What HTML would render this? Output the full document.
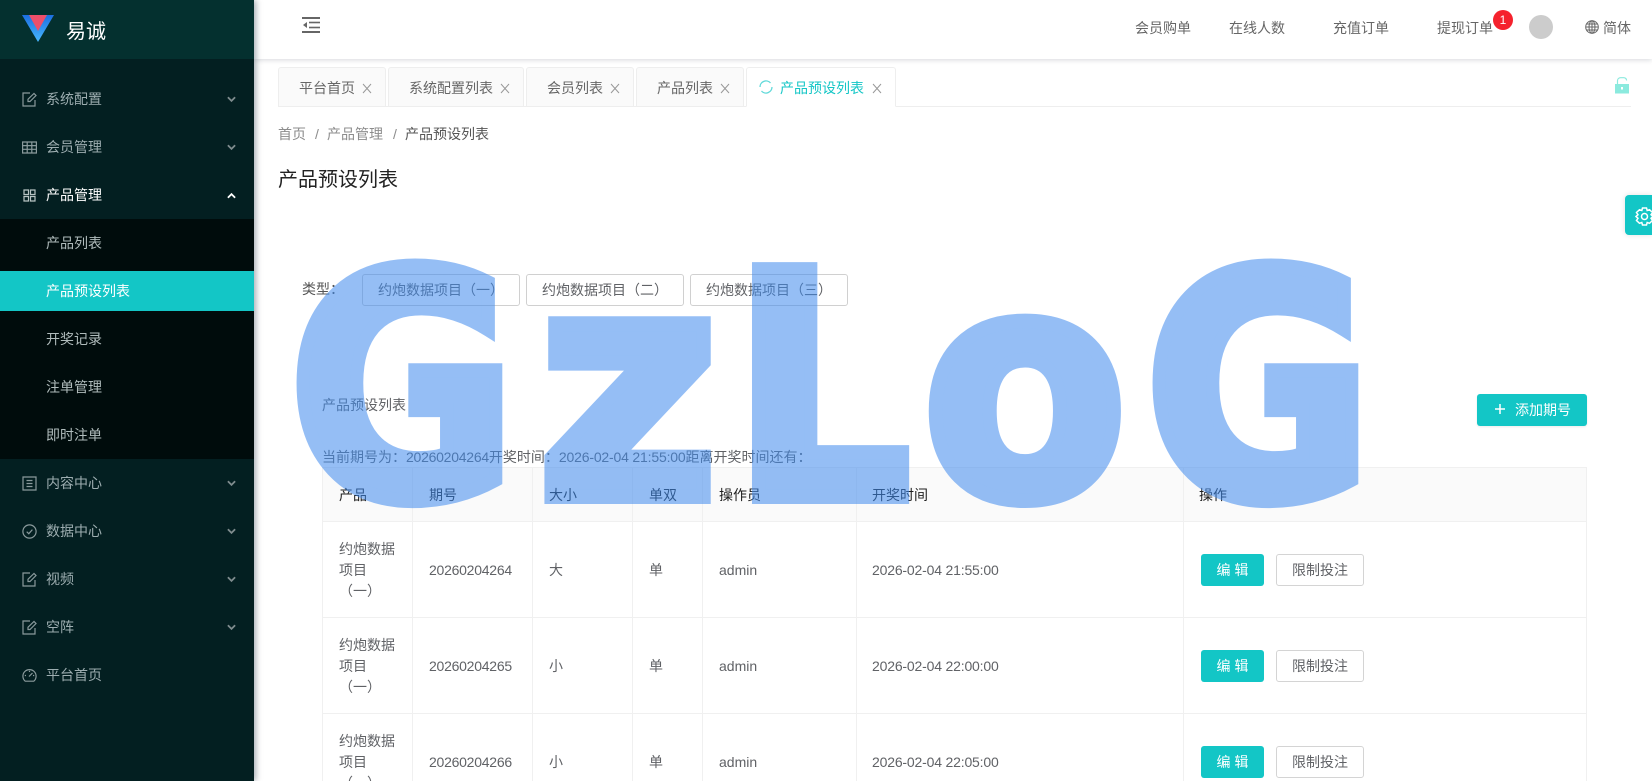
<!DOCTYPE html>
<html lang="zh-CN"><head><meta charset="utf-8"><title>产品预设列表</title>
<style>
*{box-sizing:border-box}
html,body{margin:0;padding:0;width:1652px;height:781px;overflow:hidden;background:#fff}
body{position:relative;font:14px/20px "Liberation Sans","Noto Sans CJK SC",sans-serif;color:#515a6e}
.a{position:absolute}.t{position:absolute;line-height:20px;white-space:nowrap}
#side{left:0;top:0;width:254px;height:781px;background:#031f21;box-shadow:2px 0 6px rgba(0,21,41,.35);z-index:3}
#logo{left:0;top:0;width:254px;height:59px;background:#04302f}
#sub{left:0;top:219px;width:254px;height:240px;background:#000c0c}
#act{left:0;top:271px;width:254px;height:40px;background:#13c6c6}
.m{color:#9dadb0;left:46px}.s{left:46px;color:#b0bcbc}
.ic{position:absolute;left:22px;width:15px;height:15px;fill:none;stroke:#8a9a9c;stroke-width:1.2}
.ar{position:absolute;left:227px;width:9px;height:7px;fill:none;stroke:#7f8c8e;stroke-width:2}
#hd{left:254px;top:0;width:1398px;height:59px;background:#fff;box-shadow:0 1px 5px rgba(0,21,41,.16);z-index:2}
.h{color:#666;top:18px}
.tab{position:absolute;top:67px;height:40px;background:#fafafa;border:1px solid #eee;border-radius:3px 3px 0 0;color:#666}
.x{position:absolute;top:83px;width:10px;height:11px;stroke:#999;stroke-width:1;fill:none}
.btn{position:absolute;top:274px;width:158px;height:32px;border:1px solid #d0d0d0;border-radius:3px;line-height:30px;padding-left:15px;color:#606266;white-space:nowrap}
.vl{position:absolute;top:467px;width:1px;height:314px;background:#f0f0f0}
.hl{position:absolute;left:322px;width:1265px;height:1px;background:#f0f0f0}
.th{color:#1d1d1d;top:485px}.td{color:#606266}
.n{letter-spacing:-.25px}.d{letter-spacing:-.18px}
.ed{position:absolute;left:1201px;width:63px;height:32px;background:#13c6c6;border-radius:3px;color:#fff;text-align:center;line-height:32px}
.lm{position:absolute;left:1276px;width:88px;height:32px;border:1px solid #d4d4d4;border-radius:3px;color:#606266;text-align:center;line-height:30px}
#wm{position:absolute;left:0;top:0;z-index:5;pointer-events:none;opacity:.55}
#wm text{font-family:"DejaVu Sans",sans-serif;font-weight:700;font-size:340px;fill:#3f8aee;stroke:#3f8aee;stroke-width:16}
</style></head><body>

<div id="side" class="a">
<div id="logo" class="a">
<svg class="a" style="left:22px;top:15px" width="32" height="27" viewBox="0 0 32 27"><defs><linearGradient id="g" x1="0" y1="0" x2="0" y2="1"><stop offset="0" stop-color="#1c6fe0"/><stop offset="1" stop-color="#48b8ff"/></linearGradient></defs><path d="M0 0H32L16 27Z" fill="url(#g)"/><path d="M7 0H25L16 16Z" fill="#ee4f6a"/></svg>
<div class="t" style="left:66px;top:20px;font-size:20px;line-height:24px;color:#fff">易诚</div>
</div>
<div id="sub" class="a"></div><div id="act" class="a"></div>

<svg class="ic" style="top:92px" viewBox="0 0 15 15"><path d="M13 8V14H1V1H8"/><path d="M6 9.5V7.2L12 1.5L14 3.5L8 9.5Z"/></svg>
<div class="t m" style="top:89px">系统配置</div><svg class="ar" style="top:96px" viewBox="0 0 10 7"><path d="M1 1L5 5L9 1"/></svg>
<svg class="ic" style="top:140px" viewBox="0 0 15 15"><path d="M.6 2H14.4V13H.6ZM.6 5.6H14.4M.6 9.3H14.4M5.2 2V13M9.8 2V13"/></svg>
<div class="t m" style="top:137px">会员管理</div><svg class="ar" style="top:144px" viewBox="0 0 10 7"><path d="M1 1L5 5L9 1"/></svg>
<svg class="ic" style="top:188px;stroke:#b8c4c4" viewBox="0 0 15 15"><path d="M2 2H6.5V6.5H2ZM8.5 2H13V6.5H8.5ZM2 8.5H6.5V13H2ZM8.5 8.5H13V13H8.5Z"/></svg>
<div class="t" style="left:46px;top:185px;color:#fff">产品管理</div><svg class="ar" style="top:192px;stroke:#fff" viewBox="0 0 10 7"><path d="M1 6L5 2L9 6"/></svg>

<div class="t s" style="top:233px">产品列表</div>
<div class="t" style="left:46px;top:281px;color:#fff">产品预设列表</div>
<div class="t s" style="top:329px">开奖记录</div>
<div class="t s" style="top:377px">注单管理</div>
<div class="t s" style="top:425px">即时注单</div>

<svg class="ic" style="top:476px" viewBox="0 0 15 15"><path d="M1 1H14V14H1ZM4.5 4.5H10.5M4.5 7.5H10.5M4.5 10.5H10.5"/></svg>
<div class="t m" style="top:473px">内容中心</div><svg class="ar" style="top:480px" viewBox="0 0 10 7"><path d="M1 1L5 5L9 1"/></svg>
<svg class="ic" style="top:524px" viewBox="0 0 15 15"><circle cx="7.5" cy="7.5" r="6.6"/><path d="M4.7 7.7L6.8 9.7L10.4 5.6"/></svg>
<div class="t m" style="top:521px">数据中心</div><svg class="ar" style="top:528px" viewBox="0 0 10 7"><path d="M1 1L5 5L9 1"/></svg>
<svg class="ic" style="top:572px" viewBox="0 0 15 15"><path d="M13 8V14H1V1H8"/><path d="M6 9.5V7.2L12 1.5L14 3.5L8 9.5Z"/></svg>
<div class="t m" style="top:569px">视频</div><svg class="ar" style="top:576px" viewBox="0 0 10 7"><path d="M1 1L5 5L9 1"/></svg>
<svg class="ic" style="top:620px" viewBox="0 0 15 15"><path d="M13 8V14H1V1H8"/><path d="M6 9.5V7.2L12 1.5L14 3.5L8 9.5Z"/></svg>
<div class="t m" style="top:617px">空阵</div><svg class="ar" style="top:624px" viewBox="0 0 10 7"><path d="M1 1L5 5L9 1"/></svg>
<svg class="ic" style="top:668px" viewBox="0 0 15 15"><path d="M3.2 13.2A6.6 6.6 0 1 1 11.8 13.2Z"/><path d="M7 8.5L10.5 5M2.8 7.5H4M11 7.5H12.2M7.5 2.8V4"/></svg>
<div class="t m" style="top:665px">平台首页</div>
</div>

<div id="hd" class="a">
<svg class="a" style="left:48px;top:17px" width="18" height="17" viewBox="0 0 18 17" fill="#666"><rect y="0" width="18" height="2"/><rect y="14" width="18" height="2"/><rect x="7" y="4.7" width="11" height="1.6"/><rect x="7" y="9.7" width="11" height="1.6"/><path d="M5 5V11L1 8Z"/></svg>
<div class="t h" style="left:881px">会员购单</div>
<div class="t h" style="left:975px">在线人数</div>
<div class="t h" style="left:1079px">充值订单</div>
<div class="t h" style="left:1183px">提现订单</div>
<div class="a" style="left:1239px;top:10px;width:20px;height:20px;border-radius:50%;background:#f5222d;color:#fff;font-size:12px;line-height:20px;text-align:center">1</div>
<div class="a" style="left:1275px;top:15px;width:24px;height:24px;border-radius:50%;background:#ccc"></div>
<svg class="a" style="left:1331px;top:20px" width="14" height="14" viewBox="0 0 14 14" fill="none" stroke="#666"><circle cx="7" cy="7" r="6.3"/><ellipse cx="7" cy="7" rx="3" ry="6.3"/><path d="M.7 7H13.3M1.5 4H12.5M1.5 10H12.5M7 .7V13.3"/></svg>
<div class="t h" style="left:1349px">简体</div>
</div>

<div class="tab" style="left:278px;width:108px"><div class="t" style="left:20px;top:10px">平台首页</div></div>
<div class="tab" style="left:388px;width:136px"><div class="t" style="left:20px;top:10px">系统配置列表</div></div>
<div class="tab" style="left:526px;width:108px"><div class="t" style="left:20px;top:10px">会员列表</div></div>
<div class="tab" style="left:636px;width:108px"><div class="t" style="left:20px;top:10px">产品列表</div></div>
<div class="a" style="left:278px;top:106px;width:1353px;height:1px;background:#eee"></div>
<div class="tab" style="left:746px;width:150px;background:#fff;border-bottom-color:#fff;color:#13c6c6"><div class="t" style="left:33px;top:10px">产品预设列表</div></div>
<svg class="a" style="left:759px;top:80px" width="14" height="14" viewBox="0 0 14 14" fill="none" stroke="#5fd9d9" stroke-width="1.3"><path d="M1 7A6 6 0 0 1 11.5 3M13 7A6 6 0 0 1 2.5 11"/></svg>
<svg class="x" style="left:362px" viewBox="0 0 10 11"><path d="M1 1L9 10M9 1L1 10"/></svg>
<svg class="x" style="left:500px" viewBox="0 0 10 11"><path d="M1 1L9 10M9 1L1 10"/></svg>
<svg class="x" style="left:610px" viewBox="0 0 10 11"><path d="M1 1L9 10M9 1L1 10"/></svg>
<svg class="x" style="left:720px" viewBox="0 0 10 11"><path d="M1 1L9 10M9 1L1 10"/></svg>
<svg class="x" style="left:872px" viewBox="0 0 10 11"><path d="M1 1L9 10M9 1L1 10"/></svg>
<svg class="a" style="left:1615px;top:77px" width="14" height="17" viewBox="0 0 14 17"><path d="M2.5 7V3.5A3.2 3 0 0 1 5.5.7H9A3 3 0 0 1 11.6 3.5" fill="none" stroke="#8beade" stroke-width="1.2"/><rect y="7" width="14" height="9.5" fill="#8beade"/><rect x="6" y="10" width="2" height="2.5" fill="#fff"/></svg>

<div class="t" style="left:278px;top:124px;color:#8c8c8c">首页</div>
<div class="t" style="left:315px;top:124px;color:#8c8c8c">/</div>
<div class="t" style="left:327px;top:124px;color:#8c8c8c">产品管理</div>
<div class="t" style="left:393px;top:124px;color:#8c8c8c">/</div>
<div class="t" style="left:405px;top:124px;color:#555">产品预设列表</div>
<div class="t" style="left:278px;top:168px;font-size:20px;line-height:24px;color:#222">产品预设列表</div>

<div class="a" style="left:1625px;top:195px;width:27px;height:40px;background:#13c6c6;border-radius:4px 0 0 4px;box-shadow:0 0 6px rgba(0,0,0,.12)"></div>
<svg class="a" style="left:1635px;top:206px" width="17" height="21" viewBox="0 0 17 21" fill="none" stroke="#fff" stroke-width="1.5"><circle cx="9.5" cy="10.5" r="3"/><path d="M7.5 2H11.5L12.2 4.5L14.5 3.7L17.5 6.5L16 8.7L18 10.5L16 12.3L17.5 14.5L14.5 17.3L12.2 16.5L11.5 19H7.5L6.8 16.5L4.5 17.3L1.5 14.5L3 12.3L1 10.5L3 8.7L1.5 6.5L4.5 3.7L6.8 4.5Z"/></svg>

<div class="t" style="left:302px;top:279px;color:#555">类型：</div>
<div class="btn" style="left:362px">约炮数据项目（一）</div>
<div class="btn" style="left:526px">约炮数据项目（二）</div>
<div class="btn" style="left:690px">约炮数据项目（三）</div>

<div class="t" style="left:322px;top:395px;color:#606266">产品预设列表</div>
<div class="a" style="left:1477px;top:394px;width:110px;height:32px;background:#13c6c6;border-radius:3px;box-shadow:0 1px 2px rgba(0,0,0,.08)"></div>
<svg class="a" style="left:1495px;top:404px" width="10" height="10" viewBox="0 0 10 10"><path d="M5 0V10M0 5H10" stroke="#fff" stroke-width="1.5"/></svg>
<div class="t" style="left:1515px;top:400px;color:#fff">添加期号</div>

<div class="t" style="left:322px;top:447px;color:#606266">当前期号为：<span class="n">20260204264</span>开奖时间：<span class="d">2026-02-04 21:55:00</span>距离开奖时间还有：</div>

<div class="a" style="left:322px;top:467px;width:1265px;height:55px;background:#fafafa;border-radius:3px 3px 0 0"></div>
<div class="hl" style="top:467px"></div><div class="hl" style="top:521px"></div><div class="hl" style="top:617px"></div><div class="hl" style="top:713px"></div>
<div class="vl" style="left:322px"></div><div class="vl" style="left:412px"></div><div class="vl" style="left:532px"></div><div class="vl" style="left:632px"></div><div class="vl" style="left:702px"></div><div class="vl" style="left:856px"></div><div class="vl" style="left:1183px"></div><div class="vl" style="left:1586px"></div>

<div class="t th" style="left:339px">产品</div><div class="t th" style="left:429px">期号</div><div class="t th" style="left:549px">大小</div><div class="t th" style="left:649px">单双</div><div class="t th" style="left:719px">操作员</div><div class="t th" style="left:872px">开奖时间</div><div class="t th" style="left:1199px">操作</div>

<div class="t td" style="left:339px;top:539px">约炮数据</div><div class="t td" style="left:339px;top:560px">项目</div><div class="t td" style="left:339px;top:581px">（一）</div>
<div class="t td n" style="left:429px;top:560px">20260204264</div><div class="t td" style="left:549px;top:560px">大</div><div class="t td" style="left:649px;top:560px">单</div><div class="t td" style="left:719px;top:560px">admin</div><div class="t td d" style="left:872px;top:560px">2026-02-04 21:55:00</div>
<div class="ed" style="top:554px">编 辑</div><div class="lm" style="top:554px">限制投注</div>

<div class="t td" style="left:339px;top:635px">约炮数据</div><div class="t td" style="left:339px;top:656px">项目</div><div class="t td" style="left:339px;top:677px">（一）</div>
<div class="t td n" style="left:429px;top:656px">20260204265</div><div class="t td" style="left:549px;top:656px">小</div><div class="t td" style="left:649px;top:656px">单</div><div class="t td" style="left:719px;top:656px">admin</div><div class="t td d" style="left:872px;top:656px">2026-02-04 22:00:00</div>
<div class="ed" style="top:650px">编 辑</div><div class="lm" style="top:650px">限制投注</div>

<div class="t td" style="left:339px;top:731px">约炮数据</div><div class="t td" style="left:339px;top:752px">项目</div><div class="t td" style="left:339px;top:773px">（一）</div>
<div class="t td n" style="left:429px;top:752px">20260204266</div><div class="t td" style="left:549px;top:752px">小</div><div class="t td" style="left:649px;top:752px">单</div><div class="t td" style="left:719px;top:752px">admin</div><div class="t td d" style="left:872px;top:752px">2026-02-04 22:05:00</div>
<div class="ed" style="top:746px">编 辑</div><div class="lm" style="top:746px">限制投注</div>

<svg id="wm" width="1652" height="781" viewBox="0 0 1652 781">
<text transform="translate(289.3 496.4) scale(.813 .914)">G</text>
<text transform="translate(537.8 496.6) scale(.912 .93)">z</text>
<text transform="translate(733 496.7) scale(.818 .917)">L</text>
<text transform="translate(923 496.2) scale(.872 .92)">o</text>
<text transform="translate(1145.3 496.4) scale(.813 .914)">G</text>
</svg>
</body></html>
